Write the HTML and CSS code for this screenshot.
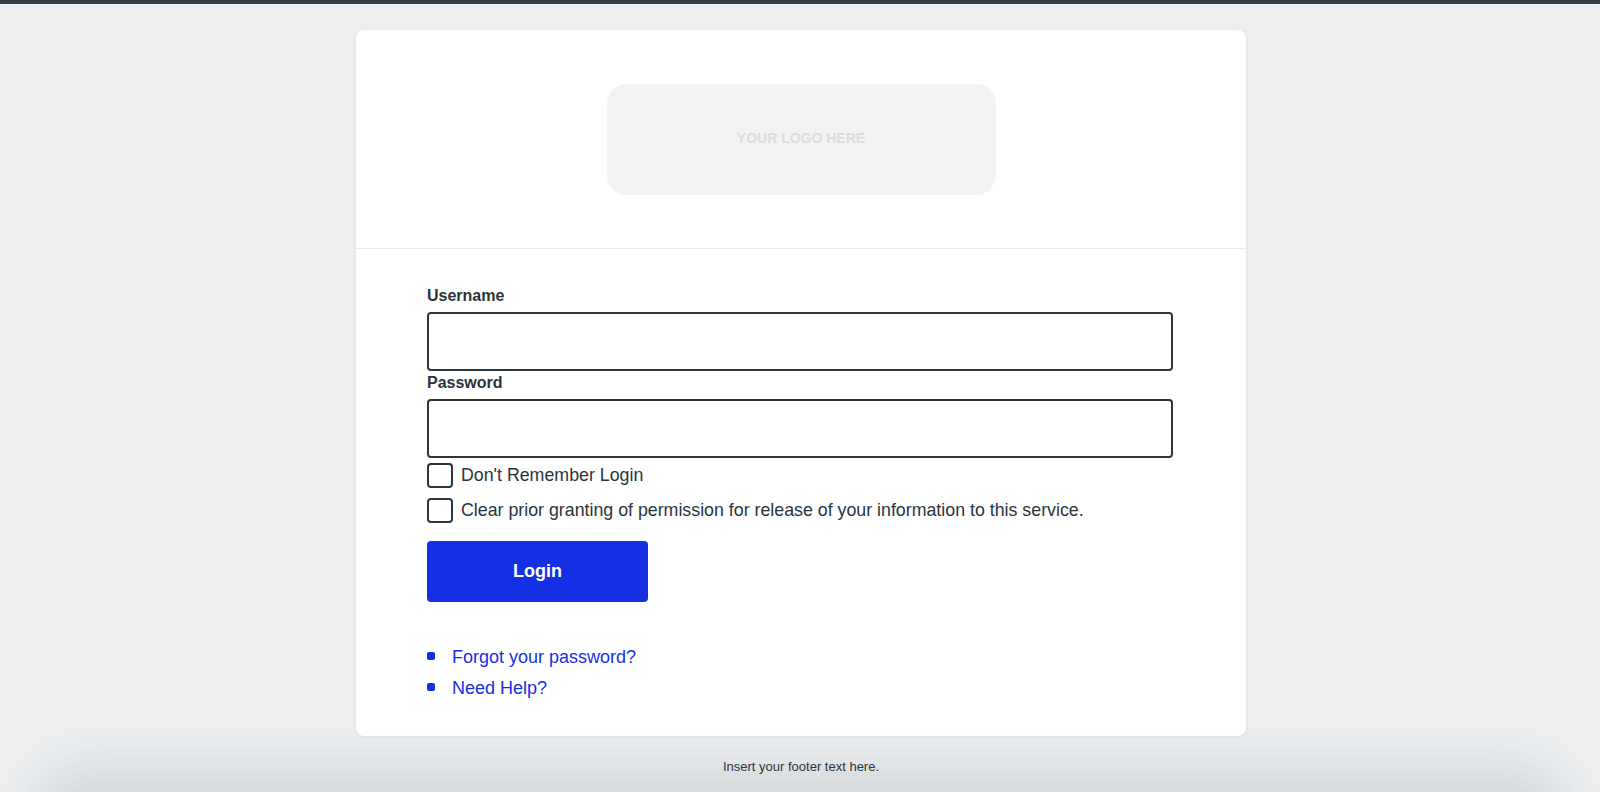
FILE: index.html
```html
<!DOCTYPE html>
<html lang="en">
<head>
<meta charset="utf-8">
<title>Login</title>
<link rel="stylesheet" href="styles.css">
</head>
<body>
<div class="topbar"></div>
<main class="page">
  <section class="card">
    <header class="card-header">
      <div class="logo">YOUR LOGO HERE</div>
    </header>
    <form class="card-body">
      <label class="field-label" for="username">Username</label>
      <input class="field-input" id="username" type="text">
      <label class="field-label" for="password">Password</label>
      <input class="field-input" id="password" type="password">
      <div class="check-row">
        <span class="check-box"></span>
        <span class="check-text">Don't Remember Login</span>
      </div>
      <div class="check-row">
        <span class="check-box"></span>
        <span class="check-text">Clear prior granting of permission for release of your information to this service.</span>
      </div>
      <button class="login-btn" type="button">Login</button>
      <ul class="links">
        <li><a href="#">Forgot your password?</a></li>
        <li><a href="#">Need Help?</a></li>
      </ul>
    </form>
  </section>
  <footer class="footer">Insert your footer text here.</footer>
</main>
<div class="bottom-shade"></div>
</body>
</html>
```

FILE: styles.css
```css
* { box-sizing: border-box; }
html, body { height: 100%; }
body {
  margin: 0;
  background: #eceef0;
  font-family: "Liberation Sans", Arial, Helvetica, sans-serif;
  color: #2a343d;
  overflow: hidden;
}
.topbar {
  height: 5px;
  background: #353e45;
  border-bottom: 1px solid #f4f5f6;
}
.page {
  display: flex;
  flex-direction: column;
  align-items: center;
  padding-top: 25px;
  padding-left: 2px;
}
.card {
  width: 890px;
  background: #ffffff;
  border-radius: 8px;
  box-shadow: 0 1px 4px rgba(0, 0, 0, 0.06);
}
.card-header {
  display: flex;
  justify-content: center;
  padding: 54px 0 53px;
  border-bottom: 1px solid #e9eaeb;
}
.logo {
  width: 389px;
  height: 111px;
  border-radius: 20px;
  background: #f3f3f3;
  display: flex;
  align-items: center;
  justify-content: center;
  padding-bottom: 3px;
  font-size: 14px;
  font-weight: bold;
  color: #dcdde0;
}
.card-body {
  display: flex;
  flex-direction: column;
  align-items: flex-start;
  padding: 37px 73px 37px 71px;
}
.field-label {
  font-size: 16px;
  font-weight: bold;
  line-height: 20px;
  margin-bottom: 6px;
  color: #2a343d;
}
.field-input {
  width: 746px;
  height: 59px;
  border: 2px solid #2c363f;
  border-radius: 4px;
  background: #fff;
  margin: 0 0 2px;
  font: inherit;
}
#password { margin-bottom: 4px; }
.check-row {
  display: flex;
  align-items: center;
  gap: 8px;
  height: 26px;
  margin-bottom: 9px;
}
.check-box {
  width: 26px;
  height: 25px;
  border: 2px solid #2c363f;
  border-radius: 4px;
  background: #fff;
  flex: none;
}
.check-text {
  font-size: 17.8px;
  line-height: 22px;
  color: #2a343d;
}
.login-btn {
  margin-top: 9px;
  width: 221px;
  height: 61px;
  border: none;
  border-radius: 4px;
  background: #1530e4;
  color: #fff;
  font-family: inherit;
  font-size: 18px;
  font-weight: bold;
  cursor: pointer;
}
.links {
  list-style: none;
  margin: 44px 0 0;
  padding: 0;
  display: flex;
  flex-direction: column;
  gap: 9px;
}
.links li {
  display: flex;
  align-items: center;
  gap: 17px;
  font-size: 18px;
  line-height: 22px;
}
.links li::before {
  content: "";
  width: 8px;
  height: 8px;
  border-radius: 2px;
  background: #1530e4;
  flex: none;
  margin-top: -2px;
}
.links a {
  color: #1530e4;
  text-decoration: none;
}
.footer {
  margin-top: 23px;
  font-size: 13px;
  line-height: 16px;
  color: #2a343d;
}
.bottom-shade {
  position: fixed;
  left: 60px;
  right: 60px;
  bottom: -50px;
  height: 50px;
  border-radius: 40px;
  box-shadow: 0 0 50px 22px rgba(60, 70, 80, 0.14);
  pointer-events: none;
}
```
